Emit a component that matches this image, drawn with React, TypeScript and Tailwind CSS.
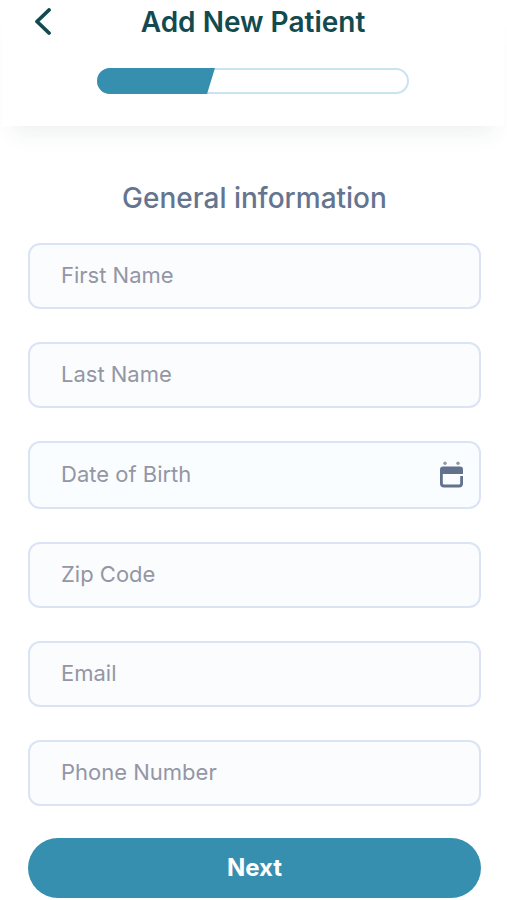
import { useState } from 'react';
import clsx from 'clsx';

interface Field {
  id: string;
  label: string;
  type: string;
  calendar?: boolean;
}

const FIELDS: Field[] = [
  { id: 'firstName', label: 'First Name', type: 'text' },
  { id: 'lastName', label: 'Last Name', type: 'text' },
  { id: 'birthDate', label: 'Date of Birth', type: 'text', calendar: true },
  { id: 'zipCode', label: 'Zip Code', type: 'text' },
  { id: 'email', label: 'Email', type: 'email' },
  { id: 'phone', label: 'Phone Number', type: 'tel' },
];

function CalendarIcon() {
  return (
    <svg viewBox="0 0 26 28" className="h-7 w-[26px]" fill="none" aria-hidden="true">
      <circle cx="6" cy="2.200" r="1.700" fill="#9298a6" />
      <circle cx="19" cy="2.200" r="1.700" fill="#9298a6" />
      <path d="M1 13V8.500Q1 5.500 4 5.500H21Q24 5.500 24 8.500V13Z" fill="#62718c" />
      <path d="M2.400 11V22.500Q2.400 25 5 25H20Q22.600 25 22.600 22.500V15" stroke="#62718c" strokeWidth="2.800" />
    </svg>
  );
}

function ProgressBar() {
  return (
    <div
      role="progressbar"
      aria-label="Form progress"
      aria-valuenow={37}
      className="mx-auto mt-[26px] h-[26px] w-[62%] overflow-hidden rounded-full bg-white inset-ring-2 inset-ring-[#c9e3f1]"
    >
      <svg viewBox="0 0 312 26" className="h-[26px] w-[312px]" aria-hidden="true">
        <path d="M0 0H118L110 26H0Z" fill="#378fb0" />
      </svg>
    </div>
  );
}

function TextField({ field, value, onChange }: { field: Field; value: string; onChange: (v: string) => void }) {
  return (
    <div className="relative">
      <input
        id={field.id}
        type={field.type}
        placeholder=" "
        value={value}
        onChange={(e) => onChange(e.target.value)}
        className={clsx(
          'peer block w-full rounded-xl border-2 border-[#dae4f5] px-[31px] text-[22px] text-[#62718c] outline-none focus:border-[#378fb0]',
          field.calendar ? 'h-[68px] bg-[#fafdff]' : 'h-[66px] bg-[#fafcfe]'
        )}
      />
      {/* Sits in the box until something is typed */}
      <label
        htmlFor={field.id}
        className="pointer-events-none absolute inset-y-0 left-[33px] flex items-center pb-0.5 text-[22px] text-[#9496a4] peer-[:not(:placeholder-shown)]:opacity-0"
      >
        {field.label}
      </label>
      {field.calendar && (
        <button type="button" aria-label="Pick a date" className="absolute inset-y-0 right-4 flex items-center">
          <CalendarIcon />
        </button>
      )}
    </div>
  );
}

export default function App() {
  const [values, setValues] = useState<Record<string, string>>({});

  return (
    <div className="min-h-screen bg-white font-['Inter',sans-serif]">
      <header className="mr-[3px] ml-0.5 h-[126px] bg-white shadow-[0_18px_20px_-10px_rgba(30,50,50,0.07)]">
        <div className="grid grid-cols-[80px_1fr_80px] items-center pt-0.5">
          <button type="button" aria-label="Back" className="flex h-10 items-center pl-8">
            <svg viewBox="0 0 18 28" className="h-7 w-[18px]" fill="none" aria-hidden="true">
              <path d="M15 2L3 13.500L15 25" stroke="#124a50" strokeWidth="3.800" strokeLinecap="round" strokeLinejoin="round" />
            </svg>
          </button>
          <h1 className="text-center text-[28px] leading-9 font-semibold whitespace-nowrap text-[#124a50]">
            Add New Patient
          </h1>
        </div>
        <ProgressBar />
      </header>

      <main className="pt-[54px] pr-[26px] pl-7">
        <h2 className="text-center text-[28px] leading-9 font-medium text-[#65758f]">General information</h2>

        <form className="mt-[27px]" onSubmit={(e) => e.preventDefault()}>
          <div className="flex flex-col gap-[33px]">
            {FIELDS.map((field) => (
              <TextField
                key={field.id}
                field={field}
                value={values[field.id] || ''}
                onChange={(v) => setValues({ ...values, [field.id]: v })}
              />
            ))}
          </div>
          <button
            type="submit"
            className="mt-8 h-[60px] w-full rounded-full bg-[#378fb0] text-2xl font-bold text-white"
          >
            Next
          </button>
        </form>
      </main>
    </div>
  );
}
